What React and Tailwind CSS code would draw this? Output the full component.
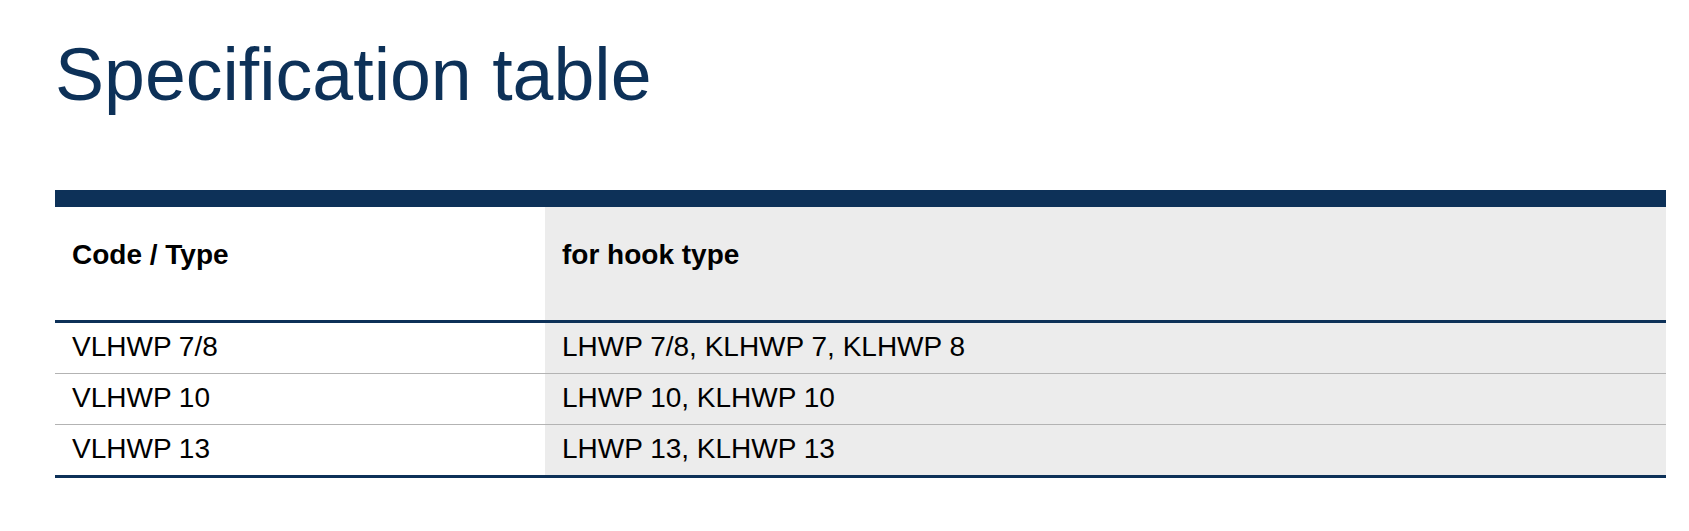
const rows = [
  { code: 'VLHWP 7/8', hooks: 'LHWP 7/8, KLHWP 7, KLHWP 8' },
  { code: 'VLHWP 10', hooks: 'LHWP 10, KLHWP 10' },
  { code: 'VLHWP 13', hooks: 'LHWP 13, KLHWP 13' },
]

const App = () => {
  return (
    <div className="min-h-[531px] bg-white pl-[55px] pr-[23px] pt-[38px] font-['Liberation_Sans',Arial,sans-serif] text-black">
      <h1 className="text-[73.5px] font-normal leading-none text-[#0d3158]">Specification table</h1>

      <div className="mt-[78px] border-t-[17px] border-[#0d3158]">
        <div className="grid grid-cols-[490px_1fr] border-b-[3px] border-[#0d3158] text-[28px] font-bold leading-[32px]">
          <div className="h-[113px] px-[17px] pt-[32px]">Code / Type</div>
          <div className="h-[113px] bg-[#ececec] px-[17px] pt-[32px]">for hook type</div>
        </div>

        {rows.map((row, i) => (
          <div
            key={row.code}
            className={`grid grid-cols-[490px_1fr] text-[28px] leading-[32px] ${i === rows.length - 1 ? 'border-b-[3px] border-[#0d3158]' : 'border-b border-[#b3b3b3]'}`}
          >
            <div className="h-[50px] px-[17px] pt-[8px]">{row.code}</div>
            <div className="h-[50px] bg-[#ececec] px-[17px] pt-[8px]">{row.hooks}</div>
          </div>
        ))}
      </div>
    </div>
  )
}

export default App
